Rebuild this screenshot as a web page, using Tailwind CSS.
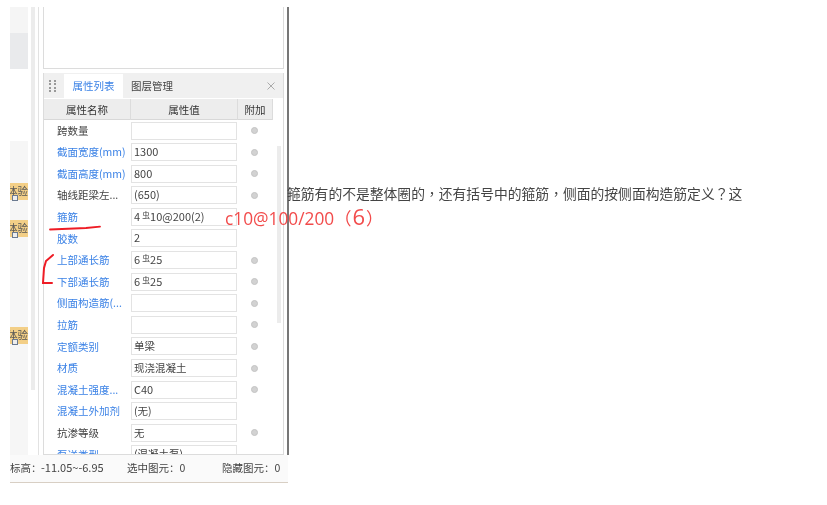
<!DOCTYPE html>
<html lang="en">
<head>
  <meta charset="UTF-8" />
  <title>属性列表</title>
  <script src="https://cdn.jsdelivr.net/npm/@tailwindcss/browser@4"></script>
</head>
<body class="bg-white">
<div class="relative w-[827px] h-[505px] overflow-hidden bg-white blur-[0.35px] font-['Noto_Sans_CJK_SC','Noto_Sans',sans-serif] text-[10.5px] text-[#444]">
  <div class="flex pt-[7px] pl-[10px]">

    <!-- left app window -->
    <div class="w-[278px] h-[476px] flex flex-col border-b border-[#d8cfc4]">
      <div class="flex h-[448px]">
        <!-- task strip -->
        <div class="w-[18px] flex flex-col shrink-0">
          <div class="h-[26px] bg-[#f5f5f5]"></div>
          <div class="h-[36px] bg-[#e9eaec]"></div>
          <div class="h-[72px] bg-white"></div>
          <div class="flex-1 bg-[#f6f6f6] relative">
            <div class="absolute left-0 top-[42px] w-[18px] h-[17px] bg-[#f3cf87] leading-[15px] text-[#555] overflow-hidden whitespace-nowrap flex justify-end">体验</div>
            <div class="absolute left-[2px] top-[54px] w-[6px] h-[6px] border border-[#6b7a90] bg-[#eee]"></div>
            <div class="absolute left-0 top-[79px] w-[18px] h-[17px] bg-[#f3cf87] leading-[15px] text-[#555] overflow-hidden whitespace-nowrap flex justify-end">体验</div>
            <div class="absolute left-[2px] top-[91px] w-[6px] h-[6px] border border-[#6b7a90] bg-[#eee]"></div>
            <div class="absolute left-0 top-[186px] w-[18px] h-[17px] bg-[#f3cf87] leading-[15px] text-[#555] overflow-hidden whitespace-nowrap flex justify-end">体验</div>
            <div class="absolute left-[2px] top-[198px] w-[6px] h-[6px] border border-[#6b7a90] bg-[#eee]"></div>
          </div>
        </div>
        <!-- scroll gutter -->
        <div class="w-[3px] shrink-0"></div>
        <div class="w-[4px] h-[383px] bg-[#ececec] shrink-0"></div>
        <div class="w-[3px] shrink-0"></div>
        <div class="w-[1px] bg-[#e2e2e2] shrink-0"></div>
        <div class="w-[4px] shrink-0"></div>

        <!-- panels -->
        <div class="w-[241px] shrink-0 flex flex-col">
          <div class="h-[62px] border border-t-0 border-[#dcdcdc] bg-white"></div>
          <div class="h-[4px]"></div>
          <div class="flex-1 border border-t-0 border-[#dcdcdc] overflow-hidden flex flex-col">
            <!-- tabs -->
            <div class="h-[25px] shrink-0 bg-[#f0f0f0] flex items-stretch pt-[1px]">
              <div class="w-[20px] grid grid-cols-2 gap-x-[2px] gap-y-[1.5px] content-center justify-center pl-[5px] pr-[7px]">
                <i class="w-[2px] h-[2px] bg-[#999]"></i><i class="w-[2px] h-[2px] bg-[#999]"></i>
                <i class="w-[2px] h-[2px] bg-[#999]"></i><i class="w-[2px] h-[2px] bg-[#999]"></i>
                <i class="w-[2px] h-[2px] bg-[#999]"></i><i class="w-[2px] h-[2px] bg-[#999]"></i>
                <i class="w-[2px] h-[2px] bg-[#999]"></i><i class="w-[2px] h-[2px] bg-[#999]"></i>
              </div>
              <div class="w-[59px] bg-white text-[#3b82e6] flex items-center justify-center">属性列表</div>
              <div class="ml-[8px] flex items-center">图层管理</div>
              <svg class="ml-auto mr-[8px] self-center" width="8" height="8" viewBox="0 0 8 8"><path d="M.5.5l7 7M7.5.5l-7 7" stroke="#aaa" fill="none"/></svg>
            </div>
            <!-- table head -->
            <div class="h-[21px] shrink-0 w-[229px] grid grid-cols-[87px_107px_35px] bg-[#ededed] border-b border-[#d8d8d8] text-center leading-[21px] mt-[1px] text-[#333]">
              <div class="border-r border-[#dcdcdc]">属性名称</div>
              <div class="border-r border-[#dcdcdc]">属性值</div>
              <div class="border-r border-[#dcdcdc]">附加</div>
            </div>
            <!-- rows -->
            <div id="rows" class="relative pt-[1.5px] flex flex-col gap-[3.6px]">
              <div class="absolute left-[233px] top-[26px] w-[4px] h-[177px] bg-[#ececec]"></div>
              <div class="flex items-center h-[18px]"><span class="w-[87px] pl-[13px] whitespace-nowrap">跨数量</span><span class="w-[106px] h-[18px] border border-[#e3e3e3] px-[2px] leading-[16px]"></span><i class="ml-[14px] w-[7px] h-[7px] rounded-full bg-[#d2d2d2] border border-[#c4c4c4]"></i></div>
              <div class="flex items-center h-[18px]"><span class="w-[87px] pl-[13px] whitespace-nowrap text-[#3b82e6]">截面宽度(mm)</span><span class="w-[106px] h-[18px] border border-[#e3e3e3] px-[2px] leading-[15px] text-[11px]">1300</span><i class="ml-[14px] w-[7px] h-[7px] rounded-full bg-[#d2d2d2] border border-[#c4c4c4]"></i></div>
              <div class="flex items-center h-[18px]"><span class="w-[87px] pl-[13px] whitespace-nowrap text-[#3b82e6]">截面高度(mm)</span><span class="w-[106px] h-[18px] border border-[#e3e3e3] px-[2px] leading-[15px] text-[11px]">800</span><i class="ml-[14px] w-[7px] h-[7px] rounded-full bg-[#d2d2d2] border border-[#c4c4c4]"></i></div>
              <div class="flex items-center h-[18px]"><span class="w-[87px] pl-[13px] whitespace-nowrap">轴线距梁左...</span><span class="w-[106px] h-[18px] border border-[#e3e3e3] px-[2px] leading-[15px] text-[11px]">(650)</span><i class="ml-[14px] w-[7px] h-[7px] rounded-full bg-[#d2d2d2] border border-[#c4c4c4]"></i></div>
              <div class="flex items-center h-[18px]"><span class="w-[87px] pl-[13px] whitespace-nowrap text-[#3b82e6]">箍筋</span><span class="w-[106px] h-[18px] border border-[#e3e3e3] px-[2px] leading-[15px] text-[11px]">4<sup class="text-[8px] top-[-3px] ml-[2px]">虫</sup>10@200(2)</span></div>
              <div class="flex items-center h-[18px]"><span class="w-[87px] pl-[13px] whitespace-nowrap text-[#3b82e6]">胶数</span><span class="w-[106px] h-[18px] border border-[#e3e3e3] px-[2px] leading-[15px] text-[11px]">2</span></div>
              <div class="flex items-center h-[18px]"><span class="w-[87px] pl-[13px] whitespace-nowrap text-[#3b82e6]">上部通长筋</span><span class="w-[106px] h-[18px] border border-[#e3e3e3] px-[2px] leading-[15px] text-[11px]">6<sup class="text-[8px] top-[-3px] ml-[2px]">虫</sup>25</span><i class="ml-[14px] w-[7px] h-[7px] rounded-full bg-[#d2d2d2] border border-[#c4c4c4]"></i></div>
              <div class="flex items-center h-[18px]"><span class="w-[87px] pl-[13px] whitespace-nowrap text-[#3b82e6]">下部通长筋</span><span class="w-[106px] h-[18px] border border-[#e3e3e3] px-[2px] leading-[15px] text-[11px]">6<sup class="text-[8px] top-[-3px] ml-[2px]">虫</sup>25</span><i class="ml-[14px] w-[7px] h-[7px] rounded-full bg-[#d2d2d2] border border-[#c4c4c4]"></i></div>
              <div class="flex items-center h-[18px]"><span class="w-[87px] pl-[13px] whitespace-nowrap text-[#3b82e6]">侧面构造筋(...</span><span class="w-[106px] h-[18px] border border-[#e3e3e3] px-[2px] leading-[16px]"></span><i class="ml-[14px] w-[7px] h-[7px] rounded-full bg-[#d2d2d2] border border-[#c4c4c4]"></i></div>
              <div class="flex items-center h-[18px]"><span class="w-[87px] pl-[13px] whitespace-nowrap text-[#3b82e6]">拉筋</span><span class="w-[106px] h-[18px] border border-[#e3e3e3] px-[2px] leading-[16px]"></span><i class="ml-[14px] w-[7px] h-[7px] rounded-full bg-[#d2d2d2] border border-[#c4c4c4]"></i></div>
              <div class="flex items-center h-[18px]"><span class="w-[87px] pl-[13px] whitespace-nowrap text-[#3b82e6]">定额类别</span><span class="w-[106px] h-[18px] border border-[#e3e3e3] px-[2px] leading-[16px]">单梁</span><i class="ml-[14px] w-[7px] h-[7px] rounded-full bg-[#d2d2d2] border border-[#c4c4c4]"></i></div>
              <div class="flex items-center h-[18px]"><span class="w-[87px] pl-[13px] whitespace-nowrap text-[#3b82e6]">材质</span><span class="w-[106px] h-[18px] border border-[#e3e3e3] px-[2px] leading-[16px]">现浇混凝土</span><i class="ml-[14px] w-[7px] h-[7px] rounded-full bg-[#d2d2d2] border border-[#c4c4c4]"></i></div>
              <div class="flex items-center h-[18px]"><span class="w-[87px] pl-[13px] whitespace-nowrap text-[#3b82e6]">混凝土强度...</span><span class="w-[106px] h-[18px] border border-[#e3e3e3] px-[2px] leading-[15px] text-[11px]">C40</span><i class="ml-[14px] w-[7px] h-[7px] rounded-full bg-[#d2d2d2] border border-[#c4c4c4]"></i></div>
              <div class="flex items-center h-[18px]"><span class="w-[87px] pl-[13px] whitespace-nowrap text-[#3b82e6]">混凝土外加剂</span><span class="w-[106px] h-[18px] border border-[#e3e3e3] px-[2px] leading-[16px]">(无)</span></div>
              <div class="flex items-center h-[18px]"><span class="w-[87px] pl-[13px] whitespace-nowrap">抗渗等级</span><span class="w-[106px] h-[18px] border border-[#e3e3e3] px-[2px] leading-[16px]">无</span><i class="ml-[14px] w-[7px] h-[7px] rounded-full bg-[#d2d2d2] border border-[#c4c4c4]"></i></div>
              <div class="flex items-center h-[18px]"><span class="w-[87px] pl-[13px] whitespace-nowrap text-[#3b82e6]">泵送类型</span><span class="w-[106px] h-[18px] border border-[#e3e3e3] px-[2px] leading-[16px]">(混凝土泵)</span></div>
            </div>
          </div>
        </div>
        <div class="w-[3px] shrink-0"></div>
        <div class="w-[1.5px] shrink-0 bg-[#777]"></div>
      </div>
      <!-- status bar -->
      <div class="flex-1 bg-[#fafafa] flex items-center whitespace-nowrap overflow-hidden pb-[2px]">
        <span class="w-[31px]">标高：</span><span class="w-[86px] text-[11px]">-11.05~-6.95</span><span class="w-[95px]">选中图元：0</span><span>隐藏图元：0</span>
      </div>
    </div>

    <!-- question text -->
    <p class="w-[460px] -ml-[1px] mt-[176px] h-fit text-[13.8px] leading-[20px] text-[#444] whitespace-nowrap font-['Noto_Sans_CJK_TC',sans-serif]">箍筋有的不是整体圈的，还有括号中的箍筋，侧面的按侧面构造筋定义？这</p>
  </div>

  <!-- red annotations drawn over the screenshot -->
  <div class="absolute left-[225px] top-[203px] text-[17.3px] leading-[26px] text-[#f24b4b] whitespace-nowrap font-['Open_Sans','Noto_Sans_CJK_TC',sans-serif]">c10@100/200（<span class="text-[22px] mx-[1px]">6</span>）</div>
  <svg class="absolute left-0 top-0 pointer-events-none" width="827" height="505" fill="none" stroke="#ee1c25" stroke-linecap="round">
    <path d="M50 229.5 L86 228 L100 226.7" stroke-width="1.8"/>
    <path d="M53 255 L46 261 L44 268 L43 283 L52 283" stroke-width="2"/>
  </svg>
</div>
</body>
</html>
